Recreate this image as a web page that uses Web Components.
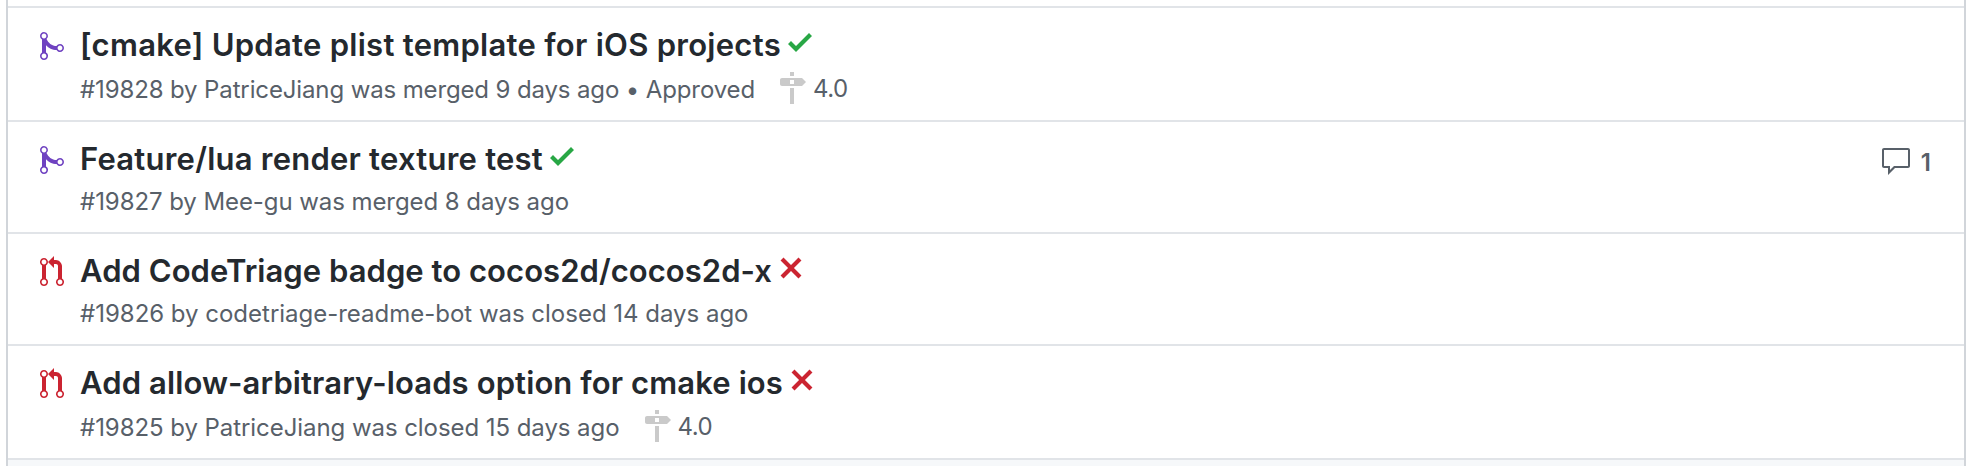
<!DOCTYPE html>
<html lang="en"><head><meta charset="utf-8"><title>Pull requests</title>
<style>
body{margin:0;background:#fff;font-family:Inter,"Liberation Sans",sans-serif;color:#24292e;height:466px;overflow:hidden}
</style></head><body>
<pr-list>
<pr-row state="merged" check="pass" tall>
<fit-text slot="title" width="701">[cmake] Update plist template for iOS projects</fit-text>
<fit-text slot="meta" width="675">#19828 by PatriceJiang was merged 9 days ago • Approved</fit-text>
<pr-milestone slot="milestone">4.0</pr-milestone>
</pr-row>
<pr-row state="merged" check="pass">
<fit-text slot="title" width="463">Feature/lua render texture test</fit-text>
<fit-text slot="meta" width="489">#19827 by Mee-gu was merged 8 days ago</fit-text>
<pr-comments slot="comments">1</pr-comments>
</pr-row>
<pr-row state="closed" check="fail">
<fit-text slot="title" width="692">Add CodeTriage badge to cocos2d/cocos2d-x</fit-text>
<fit-text slot="meta" width="668.500">#19826 by codetriage-readme-bot was closed 14 days ago</fit-text>
</pr-row>
<pr-row state="closed" check="fail" tall>
<fit-text slot="title" width="703">Add allow-arbitrary-loads option for cmake ios</fit-text>
<fit-text slot="meta" width="539.500">#19825 by PatriceJiang was closed 15 days ago</fit-text>
<pr-milestone slot="milestone">4.0</pr-milestone>
</pr-row>
</pr-list>
<script>
const ICONS={
merged:[12,'M10 7c-.73 0-1.38.41-1.73 1.02V8C7.22 7.98 6 7.64 5.14 6.98c-.75-.58-1.5-1.61-1.89-2.44A1.993 1.993 0 002 .99C.89.99 0 1.89 0 3a2 2 0 001 1.72v6.56c-.59.35-1 .99-1 1.72 0 1.11.89 2 2 2a1.993 1.993 0 001-3.72V7.67c.67.7 1.44 1.27 2.3 1.69.86.42 2.03.63 2.97.64v-.02c.36.61 1 1.02 1.73 1.02 1.11 0 2-.89 2-2 0-1.11-.89-2-2-2zm-6.8 6c0 .66-.55 1.2-1.2 1.2-.65 0-1.2-.55-1.2-1.2 0-.65.55-1.2 1.2-1.2.65 0 1.2.55 1.2 1.2zM2 4.2C1.34 4.2.8 3.65.8 3c0-.65.55-1.2 1.2-1.2.65 0 1.2.55 1.2 1.2 0 .65-.55 1.2-1.2 1.2zm8 6c-.66 0-1.2-.55-1.2-1.2 0-.65.55-1.2 1.2-1.2.65 0 1.2.55 1.2 1.2 0 .65-.55 1.2-1.2 1.2z','#6f42c1'],
closed:[12,'M11 11.28V5c-.03-.78-.34-1.47-.94-2.06C9.46 2.35 8.78 2.03 8 2H7V0L4 3l3 3V4h1c.27.02.48.11.69.31.21.2.3.42.31.69v6.28A1.993 1.993 0 0010 15a1.993 1.993 0 001-3.72zm-1 2.92c-.66 0-1.2-.55-1.2-1.2 0-.65.55-1.2 1.2-1.2.65 0 1.2.55 1.2 1.2 0 .65-.55 1.2-1.2 1.2zM4 3c0-1.11-.89-2-2-2a1.993 1.993 0 00-1 3.72v6.56A1.993 1.993 0 002 15a1.993 1.993 0 001-3.72V4.72c.59-.34 1-.98 1-1.72zm-.8 10c0 .66-.55 1.2-1.2 1.2-.65 0-1.2-.55-1.2-1.2 0-.65.55-1.2 1.2-1.2.65 0 1.2.55 1.2 1.2zM2 4.2C1.34 4.2.8 3.65.8 3c0-.65.55-1.2 1.2-1.2.65 0 1.2.55 1.2 1.2 0 .65-.55 1.2-1.2 1.2z','#cb2431'],
pass:[12,'M12 5l-8 8-4-4 1.5-1.5L4 10l6.5-6.5L12 5z','#28a745'],
fail:[12,'M7.48 8l3.75 3.75-1.48 1.48L6 9.48l-3.75 3.75-1.48-1.48L4.52 8 .77 4.25l1.48-1.48L6 6.52l3.75-3.75 1.48 1.48L7.48 8z','#cb2431'],
comment:[16,'M14 1H2c-.55 0-1 .45-1 1v8c0 .55.45 1 1 1h2v3.5L7.5 11H14c.55 0 1-.45 1-1V2c0-.55-.45-1-1-1zm0 9H7l-2 2v-2H2V2h12v8z','#586069'],
milestone:[14,'M8 2H6V0h2v2zm4 5H2c-.55 0-1-.45-1-1V4c0-.55.45-1 1-1h10l2 2-2 2zM8 4H6v2h2V4zM6 16h2V8H6v8z','#cacaca']};
class OctIcon extends HTMLElement{
 constructor(){super();this.attachShadow({mode:'open'})}
 connectedCallback(){const [w,d,c]=ICONS[this.getAttribute('name')];
 this.shadowRoot.innerHTML=`<style>:host{display:block;flex:none;height:32px}svg{display:block}</style><svg width="${w*2}" height="32" viewBox="0 0 ${w} 16" fill="${c}"><path fill-rule="evenodd" d="${d}"/></svg>`}
}
/* One line of text, tracked so that it fills the given width. */
class FitText extends HTMLElement{
 constructor(){super();this.attachShadow({mode:'open'}).innerHTML='<style>:host{display:block;flex:none;white-space:nowrap}span{display:inline-block}</style><span><slot></slot></span>'}
 connectedCallback(){const w=+this.getAttribute('width'),s=this.shadowRoot.querySelector('span');
 this.style.width=w+'px';
 s.style.letterSpacing=(w-s.getBoundingClientRect().width)/this.textContent.length+'px'}
}
class PrMilestone extends HTMLElement{
 constructor(){super();this.attachShadow({mode:'open'}).innerHTML='<style>:host{display:flex;gap:7px;margin-left:23px}span{line-height:33px;letter-spacing:-.5px}</style><oct-icon name="milestone"></oct-icon><span><slot></slot></span>'}
}
class PrComments extends HTMLElement{
 constructor(){super();this.attachShadow({mode:'open'}).innerHTML='<style>:host{display:flex;gap:9px;padding-right:1px;color:#586069;font-size:24px;font-weight:600}span{line-height:33px}</style><oct-icon name="comment"></oct-icon><span><slot></slot></span>'}
}
class PrRow extends HTMLElement{
 constructor(){super();this.attachShadow({mode:'open'})}
 connectedCallback(){this.shadowRoot.innerHTML=`<style>
 :host{display:grid;grid-template-columns:24px 1fr auto;column-gap:16px;box-sizing:border-box;height:112px;padding:0 32px;border-top:2px solid #e1e4e8}
 :host([tall]){height:114px}
 .state{margin-top:22px}
 .title{display:flex;height:48px;margin-top:13px;gap:7px;font-size:31px;font-weight:600;line-height:48px}
 .title oct-icon{margin-top:5px}
 .meta{display:flex;height:36px;margin-top:1px;color:#586069;font-size:24px;line-height:36px}
 :host([tall]) .meta{margin-top:3px}
 ::slotted(pr-comments){margin-top:24px}
 </style><oct-icon class="state" name="${this.getAttribute('state')}"></oct-icon>
 <div><div class="title"><slot name="title"></slot><oct-icon name="${this.getAttribute('check')}"></oct-icon></div>
 <div class="meta"><slot name="meta"></slot><slot name="milestone"></slot></div></div>
 <slot name="comments"></slot>`}
}
class PrList extends HTMLElement{
 constructor(){super();this.attachShadow({mode:'open'}).innerHTML=`<style>
 :host{display:flex;flex-direction:column;box-sizing:border-box;width:1960px;height:466px;margin-left:6px;padding-top:6px;border:solid #d1d5da;border-width:0 2px}
 .foot{flex:1;border-top:2px solid #e1e4e8;background:#f6f8fa}</style><slot></slot><div class="foot"></div>`}
}
customElements.define('oct-icon',OctIcon);
customElements.define('pr-list',PrList);
customElements.define('pr-row',PrRow);
customElements.define('fit-text',FitText);
customElements.define('pr-milestone',PrMilestone);
customElements.define('pr-comments',PrComments);
</script></body></html>
